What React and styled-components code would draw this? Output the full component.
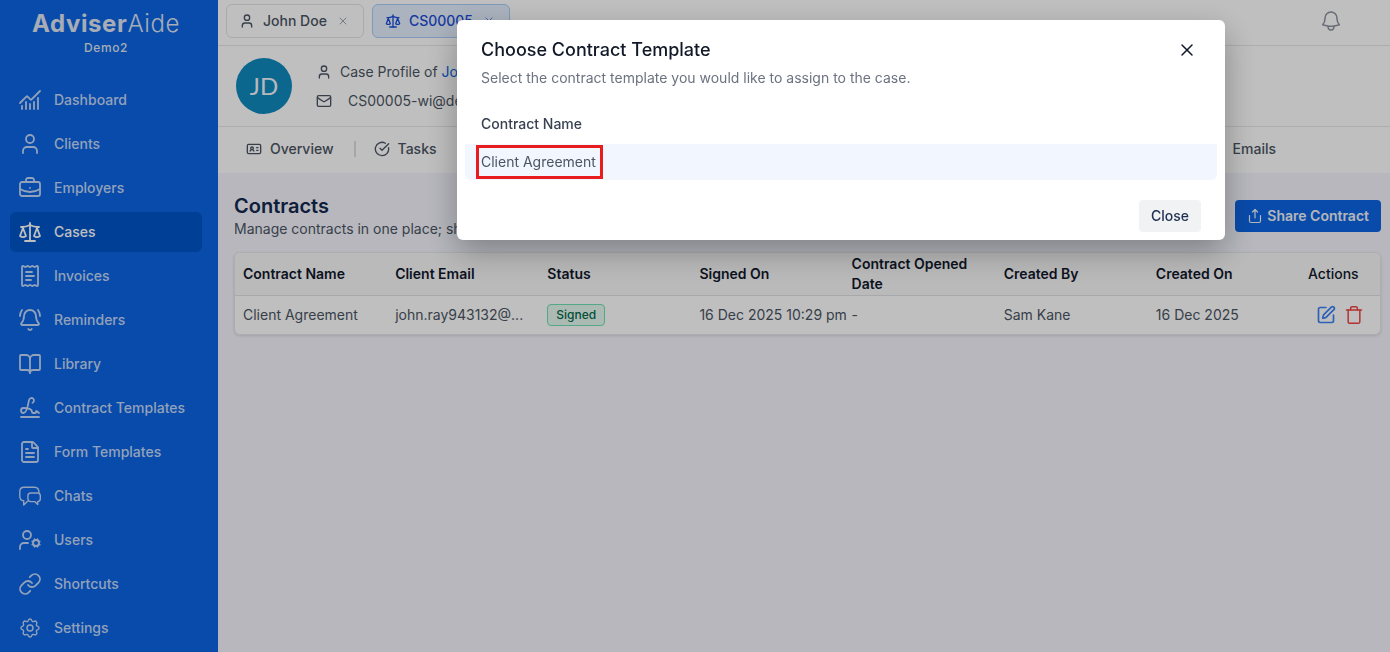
import React from "react";
import styled, { createGlobalStyle } from "styled-components";
import {
  ChartNoAxesCombined, User, BriefcaseBusiness, Scale, ReceiptText, BellRing, BookOpen,
  Signature, FileText, UserCog, Link, Mail, X, IdCard, CircleCheckBig, SquarePen, Trash,
} from "lucide-react";
import { HiOutlineBell } from "react-icons/hi2";
import { TbSettings } from "react-icons/tb";

const Global = createGlobalStyle`
  *, *::before, *::after { box-sizing: border-box; }
  body {
    margin: 0;
    font-family: Inter, "Liberation Sans", sans-serif;
    font-size: 14px;
    line-height: 20px;
    color: #4b5563;
    background: #f4f5fd;
  }
  h1, h2, p { margin: 0; }
  button { font: inherit; color: inherit; border: 0; padding: 0; background: none; cursor: pointer; }
  a { color: inherit; text-decoration: none; }
  svg { flex-shrink: 0; display: block; }
`;

const Page = styled.div`
  display: flex;
  min-height: 100vh;
`;

const Sidebar = styled.aside`
  flex: 0 0 218px;
  padding: 8px 16px 4px 10px;
  background: #0c64e4;
  color: #c3d8f8;
`;

const Brand = styled.div`
  text-align: center;
  color: #dfe6f2;
`;

const BrandName = styled.div`
  font-size: 24px;
  line-height: 32px;
  font-weight: 700;
  letter-spacing: 0.025em;
  span { font-weight: 300; }
`;

const BrandSub = styled.div`
  font-size: 12px;
  line-height: 16px;
  font-weight: 500;
  letter-spacing: 0.05em;
`;

const Nav = styled.nav`
  display: flex;
  flex-direction: column;
  gap: 4px;
  margin-top: 24px;
`;

const NavLink = styled.a`
  display: flex;
  align-items: center;
  gap: 12px;
  height: 40px;
  padding: 0 8px;
  border-radius: 6px;
  font-weight: 500;
  color: ${(p) => (p.$active ? "#fff" : "#c3d8f8")};
  background: ${(p) => (p.$active ? "#0055c8" : "transparent")};
`;

const Main = styled.main`
  flex: 1;
  min-width: 0;
`;

const TopBar = styled.header`
  display: flex;
  align-items: center;
  justify-content: space-between;
  height: 46px;
  padding: 0 47px 4px 8px;
  background: #fff;
  border-bottom: 1px solid #e5e7eb;
`;

const Tabs = styled.div`
  display: flex;
  gap: 8px;
`;

const Tab = styled.div`
  display: flex;
  align-items: center;
  gap: 8px;
  height: 34px;
  padding: 0 14px 0 12px;
  border: 1px solid ${(p) => (p.$active ? "#a9cdfb" : "#e1e3e8")};
  border-radius: 6px;
  background: ${(p) => (p.$active ? "#e4effe" : "#fff")};
  color: ${(p) => (p.$active ? "#1d4ed8" : "#4b5563")};
  font-weight: 500;
  button { margin-left: 2px; color: ${(p) => (p.$active ? "#5d83e6" : "#9ca3af")}; }
`;

const Profile = styled.section`
  display: flex;
  align-items: center;
  gap: 24px;
  height: 81px;
  padding: 0 18px;
  background: #fff;
  border-bottom: 1px solid #e5e7eb;
`;

const Avatar = styled.div`
  display: grid;
  place-items: center;
  width: 56px;
  height: 56px;
  border-radius: 50%;
  background: #118abe;
  color: #f3f6fa;
  font-family: Lato, sans-serif;
  font-size: 24px;
`;

const ProfileLines = styled.div`
  display: flex;
  flex-direction: column;
  gap: 9px;
`;

const ProfileLine = styled.div`
  display: flex;
  align-items: center;
  gap: ${(p) => p.$gap}px;
  white-space: nowrap;
  a { color: #0c64e4; }
`;

const SubNav = styled.nav`
  display: flex;
  align-items: center;
  height: 46px;
  padding: 0 114px 2px 28px;
  background: #fff;
  font-weight: 500;
  a { display: flex; align-items: center; gap: 8px; }
`;

const Divider = styled.span`
  width: 2px;
  height: 16px;
  margin: 0 18px 0 20px;
  background: #dcdee3;
`;

const LastLink = styled.span`
  margin-left: auto;
`;

const Content = styled.section`
  padding: 20px 9px 16px 16px;
`;

const Heading = styled.div`
  display: flex;
  align-items: center;
  justify-content: space-between;
  margin-bottom: 13px;
  h1 { font-size: 20px; line-height: 26px; font-weight: 600; color: #13294f; }
`;

const Primary = styled.button`
  display: flex;
  align-items: center;
  gap: 4px;
  height: 32px;
  padding: 0 12px;
  border-radius: 4px;
  background: #0c64e4;
  color: #f0f3f8;
  font-weight: 600;
`;

const TableCard = styled.div`
  border: 1px solid #e5e7eb;
  border-radius: 6px;
  background: #fff;
  box-shadow: 0 1px 3px rgba(0, 0, 0, 0.12);
  overflow: hidden;
`;

const Table = styled.table`
  width: 100%;
  table-layout: fixed;
  border-collapse: collapse;
  th, td { padding: 0 0 0 8px; text-align: left; white-space: nowrap; }
  th { height: 42px; font-weight: 600; color: #11182b; background: #f9f9fa; white-space: normal; }
  td { height: 39px; border-top: 1px solid #e0e2e6; }
  th:last-child { width: 80px; font-weight: 500; }
`;

const Badge = styled.span`
  display: inline-block;
  padding: 0 8px;
  border: 1px solid #6ee0b4;
  border-radius: 4px;
  background: #e6f9f1;
  color: #05694a;
  font-size: 12px;
  font-weight: 500;
`;

const Actions = styled.div`
  display: flex;
  justify-content: flex-end;
  gap: 8px;
  padding-right: 16px;
`;

const IconButton = styled.button`
  color: ${(p) => p.$color};
`;

const Overlay = styled.div`
  position: fixed;
  inset: 0;
  display: flex;
  justify-content: center;
  align-items: flex-start;
  padding: 20px 0 0 292px;
  background: rgba(0, 0, 0, 0.25);
`;

const Dialog = styled.div`
  width: 768px;
  border-radius: 6px;
  background: #fff;
  box-shadow: 0 12px 32px rgba(0, 0, 0, 0.3);
`;

const DialogHead = styled.div`
  display: flex;
  align-items: flex-start;
  justify-content: space-between;
  padding: 18px 28px 16px 24px;
  h2 { font-size: 18px; line-height: 24px; font-weight: 500; color: #111827; }
  p { margin-top: 6px; color: #6b7280; }
  button { margin-top: 2px; color: #111827; }
`;

const Templates = styled.table`
  width: calc(100% - 16px);
  margin: 0 8px;
  border-spacing: 0;
  th { height: 40px; padding: 0 16px; text-align: left; font-weight: 500; color: #374151; }
  td { height: 36px; padding: 0 11px; background: #f2f6fe; border-radius: 0 0 6px 6px; }
`;

const Choice = styled.button`
  display: block;
  height: 34px;
  padding: 0 4px 0 2px;
  border: 3px solid #e81c1f;
`;

const DialogFoot = styled.div`
  display: flex;
  justify-content: flex-end;
  padding: 20px 24px 8px;
  button { height: 32px; padding: 0 12px; border-radius: 4px; background: #f1f2f4; color: #1e2f52; font-weight: 500; }
`;

function ChatsIcon({ size }) {
  return (
    <svg width={size} height={size} viewBox="0 0 24 24" fill="none" stroke="currentColor" strokeWidth="1.4" strokeLinecap="round" strokeLinejoin="round">
      <path d="M21 8.600C21 5 19.500 3.200 16.500 3.200H6C3.200 3.200 1.800 4.800 1.800 7.500v4.800c0 2.600 1.200 4.200 3.900 4.500v4.300l3.600-3.700" />
      <path d="M12.700 9h6.800a2.800 2.800 0 0 1 2.800 2.800v3a2.800 2.800 0 0 1-2.600 2.800v3l-3-3h-4a2.800 2.800 0 0 1-2.800-2.800v-3A2.800 2.800 0 0 1 12.700 9Z" />
    </svg>
  );
}

function ShareIcon() {
  return (
    <svg width="16" height="16" viewBox="0 0 16 16" fill="none" stroke="currentColor" strokeWidth="1.200" strokeLinecap="round" strokeLinejoin="round">
      <path d="M8 10V1.500M5.500 4 8 1.500 10.500 4M2.500 7.500V13a1.500 1.500 0 0 0 1.500 1.500h8a1.500 1.500 0 0 0 1.500-1.500V7.500" />
    </svg>
  );
}

const navItems = [
  ["Dashboard", ChartNoAxesCombined], ["Clients", User], ["Employers", BriefcaseBusiness],
  ["Cases", Scale], ["Invoices", ReceiptText], ["Reminders", BellRing], ["Library", BookOpen],
  ["Contract Templates", Signature], ["Form Templates", FileText], ["Chats", ChatsIcon],
  ["Users", UserCog], ["Shortcuts", Link], ["Settings", TbSettings, 1.4],
];

const columns = ["Contract Name", "Client Email", "Status", "Signed On", "Contract Opened Date", "Created By", "Created On", "Actions"];

export default function App() {
  return (
    <>
      <Global />
      <Page>
        <Sidebar>
          <Brand>
            <BrandName>Adviser<span>Aide</span></BrandName>
            <BrandSub>Demo2</BrandSub>
          </Brand>
          <Nav>
            {navItems.map(([label, Icon, stroke = 1.8]) => (
              <NavLink key={label} href="#" $active={label === "Cases"}>
                <Icon size={24} strokeWidth={stroke} />{label}
              </NavLink>
            ))}
          </Nav>
        </Sidebar>
        <Main>
          <TopBar>
            <Tabs>
              <Tab><User size={16} />John Doe<button aria-label="Close John Doe"><X size={12} /></button></Tab>
              <Tab $active><Scale size={16} />CS00005<button aria-label="Close CS00005"><X size={12} /></button></Tab>
            </Tabs>
            <IconButton $color="#8b919d" aria-label="Notifications"><HiOutlineBell size={24} /></IconButton>
          </TopBar>
          <Profile>
            <Avatar>JD</Avatar>
            <ProfileLines>
              <ProfileLine $gap={8}><User size={16} /><span>Case Profile of <a href="#">John Doe</a></span></ProfileLine>
              <ProfileLine $gap={16}><Mail size={16} />CS00005-wi@demo2.adviseraide.com</ProfileLine>
            </ProfileLines>
          </Profile>
          <SubNav>
            <a href="#"><IdCard size={16} />Overview</a>
            <Divider />
            <a href="#"><CircleCheckBig size={16} />Tasks</a>
            <LastLink><a href="#">Emails</a></LastLink>
          </SubNav>
          <Content>
            <Heading>
              <div>
                <h1>Contracts</h1>
                <p>Manage contracts in one place; share and track</p>
              </div>
              <Primary><ShareIcon />Share Contract</Primary>
            </Heading>
            <TableCard>
              <Table>
                <thead><tr>{columns.map((c) => <th key={c}>{c}</th>)}</tr></thead>
                <tbody>
                  <tr>
                    <td>Client Agreement</td><td>john.ray943132@...</td><td><Badge>Signed</Badge></td>
                    <td>16 Dec 2025 10:29 pm</td><td>-</td><td>Sam Kane</td><td>16 Dec 2025</td>
                    <td>
                      <Actions>
                        <IconButton $color="#3b82f6" aria-label="Edit"><SquarePen size={20} /></IconButton>
                        <IconButton $color="#ef4444" aria-label="Delete"><Trash size={20} strokeWidth={1.8} /></IconButton>
                      </Actions>
                    </td>
                  </tr>
                </tbody>
              </Table>
            </TableCard>
          </Content>
        </Main>
      </Page>
      <Overlay>
        <Dialog role="dialog" aria-modal="true" aria-labelledby="dialog-title">
          <DialogHead>
            <div>
              <h2 id="dialog-title">Choose Contract Template</h2>
              <p>Select the contract template you would like to assign to the case.</p>
            </div>
            <button aria-label="Close dialog"><X size={20} strokeWidth={1.8} /></button>
          </DialogHead>
          <Templates>
            <thead><tr><th>Contract Name</th></tr></thead>
            <tbody><tr><td><Choice>Client Agreement</Choice></td></tr></tbody>
          </Templates>
          <DialogFoot><button>Close</button></DialogFoot>
        </Dialog>
      </Overlay>
    </>
  );
}
